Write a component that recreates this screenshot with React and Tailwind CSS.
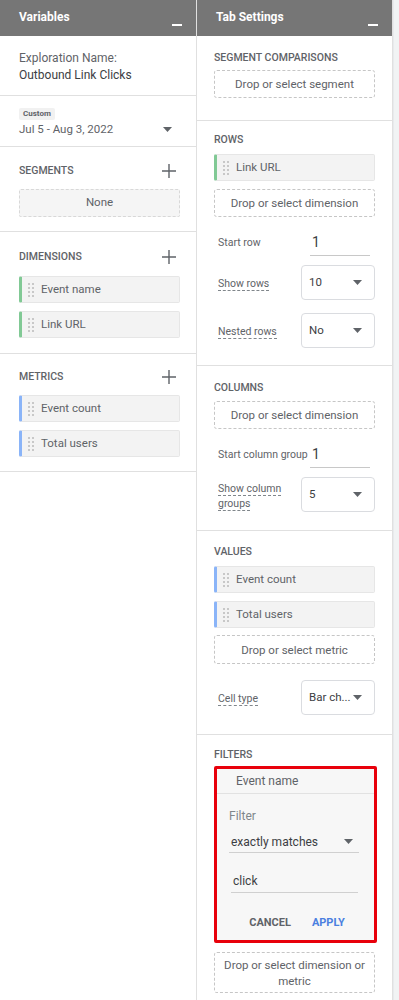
const font = { fontFamily: "Roboto, 'Noto Sans', sans-serif" };

const Minimize = () => (
    <span className="block w-[10px] h-[2px] bg-white mt-[14px]" />
);

const Plus = () => (
    <svg width="14" height="14" viewBox="0 0 14 14" className="mr-[4px]">
        <path d="M7 0v14M0 7h14" stroke="#5f6368" strokeWidth="1.4" />
    </svg>
);

const Caret = () => (
    <svg width="9" height="5" viewBox="0 0 9 5" className="shrink-0">
        <path d="M0 0h9L4.5 5z" fill="#5f6368" />
    </svg>
);

const Handle = () => (
    <div className="grid grid-cols-2 gap-x-[2px] gap-y-[2px] w-[6px]">
        {Array.from({ length: 8 }).map((_, i) => (
            <span key={i} className="w-[2px] h-[2px] bg-[#c8c8c8]" />
        ))}
    </div>
);

const Chip = ({ label, color }) => (
    <div
        className={`h-[27px] flex items-center bg-[#f3f3f3] border border-[#e6e6e6] border-l-[3px] rounded-[2px] ${
            color === "green" ? "border-l-[#81c995]" : "border-l-[#8ab4f8]"
        }`}
    >
        <div className="ml-[6px]">
            <Handle />
        </div>
        <span className="ml-[7px] text-[11.5px] text-[#5f6368]">{label}</span>
    </div>
);

const Dashed = ({ children, h = "h-[28px]" }) => (
    <div
        className={`${h} flex items-center justify-center text-center border border-dashed border-[#c6c6c6] rounded-[3px] text-[11.5px] leading-[16px] text-[#5f6368]`}
    >
        {children}
    </div>
);

const Title = ({ children, plus }) => (
    <div className="h-[14px] flex items-center justify-between">
        <span className="text-[10.5px] font-medium text-[#5f6368] uppercase">{children}</span>
        {plus && <Plus />}
    </div>
);

const Select = ({ value }) => (
    <div className="w-[74px] h-[35px] shrink-0 border border-[#dadce0] rounded-[4px] flex items-center justify-between pl-[7px] pr-[12px] text-[11.5px] text-[#3c4043] whitespace-nowrap">
        <span>{value}</span>
        <Caret />
    </div>
);

const DottedLabel = ({ children }) => (
    <span className="border-b border-dashed border-[#80868b] text-[10.5px] leading-[13px] text-[#5f6368]">
        {children}
    </span>
);

const SelectRow = ({ label, value, className = "" }) => (
    <div className={`flex items-center justify-between ${className}`}>
        <div className="pl-[4px] w-[76px] leading-[13px]">
            <DottedLabel>{label}</DottedLabel>
        </div>
        <Select value={value} />
    </div>
);

const InputRow = ({ label, value, className = "" }) => (
    <div className={`flex items-center h-[26px] ${className}`}>
        <span className="pl-[4px] w-[96px] text-[10.5px] text-[#5f6368] whitespace-nowrap">{label}</span>
        <div className="w-[60px] h-[26px] border-b border-[#c8c8c8] flex items-center pl-[2px] text-[14px] text-[#3c4043]">
            {value}
        </div>
    </div>
);

const Header = ({ title }) => (
    <div className="h-[36px] bg-[#767676] flex items-start justify-between pl-[19px] pr-[14px] pt-[10px]">
        <span className="text-[12px] leading-[15px] font-bold text-white">{title}</span>
        <Minimize />
    </div>
);

const App = () => {
    return (
        <div style={font} className="flex w-[399px] h-[1000px] bg-[#f1f3f4] overflow-hidden">
            <div className="w-[197px] shrink-0 bg-white border-r border-[#e0e0e0]">
                <Header title="Variables" />

                <div className="pl-[19px] pr-[16px] pt-[14px] pb-[11px] border-b border-[#e0e0e0] text-[12px] leading-[17px]">
                    <div className="text-[#5f6368]">Exploration Name:</div>
                    <div className="text-[#3c4043]">Outbound Link Clicks</div>
                </div>

                <div className="pl-[19px] pr-[24px] pt-[12px] pb-[8px] border-b border-[#e0e0e0]">
                    <div className="w-fit bg-[#f1f1f1] rounded-[2px] px-[4px] text-[8px] leading-[12px] font-bold text-[#5f6368]">
                        Custom
                    </div>
                    <div className="flex items-center justify-between">
                        <span className="text-[11.5px] leading-[18px] text-[#5f6368]">Jul 5 - Aug 3, 2022</span>
                        <Caret />
                    </div>
                </div>

                <div className="pl-[19px] pr-[16px] pt-[17px] pb-[14px] border-b border-[#e0e0e0]">
                    <Title plus>Segments</Title>
                    <div className="mt-[11px] h-[28px] flex items-center justify-center bg-[#f5f5f5] border border-dashed border-[#d8d8d8] rounded-[2px] text-[11.5px] text-[#5f6368]">
                        None
                    </div>
                </div>

                <div className="pl-[19px] pr-[16px] pt-[18px] pb-[15px] border-b border-[#e0e0e0]">
                    <Title plus>Dimensions</Title>
                    <div className="mt-[12px] flex flex-col gap-[8px]">
                        <Chip label="Event name" color="green" />
                        <Chip label="Link URL" color="green" />
                    </div>
                </div>

                <div className="pl-[19px] pr-[16px] pt-[16px] pb-[14px] border-b border-[#e0e0e0]">
                    <Title plus>Metrics</Title>
                    <div className="mt-[11px] flex flex-col gap-[8px]">
                        <Chip label="Event count" color="blue" />
                        <Chip label="Total users" color="blue" />
                    </div>
                </div>
            </div>

            <div className="w-[196px] shrink-0 bg-white border-r border-[#e0e0e0]">
                <Header title="Tab Settings" />

                <div className="px-[17px] pt-[15px] pb-[22px] border-b border-[#e0e0e0]">
                    <Title>Segment Comparisons</Title>
                    <div className="mt-[5px]">
                        <Dashed>Drop or select segment</Dashed>
                    </div>
                </div>

                <div className="px-[17px] pt-[12px] pb-[17px] border-b border-[#e0e0e0]">
                    <Title>Rows</Title>
                    <div className="mt-[7px] flex flex-col gap-[8px]">
                        <Chip label="Link URL" color="green" />
                        <Dashed>Drop or select dimension</Dashed>
                    </div>
                    <InputRow label="Start row" value="1" className="mt-[13px]" />
                    <SelectRow label="Show rows" value="10" className="mt-[9px]" />
                    <SelectRow label="Nested rows" value="No" className="mt-[13px]" />
                </div>

                <div className="px-[17px] pt-[15px] pb-[18px] border-b border-[#e0e0e0]">
                    <Title>Columns</Title>
                    <div className="mt-[6px]">
                        <Dashed>Drop or select dimension</Dashed>
                    </div>
                    <InputRow label="Start column group" value="1" className="mt-[13px]" />
                    <SelectRow label="Show column groups" value="5" className="mt-[9px]" />
                </div>

                <div className="px-[17px] pt-[14px] pb-[19px] border-b border-[#e0e0e0]">
                    <Title>Values</Title>
                    <div className="mt-[7px] flex flex-col gap-[8px]">
                        <Chip label="Event count" color="blue" />
                        <Chip label="Total users" color="blue" />
                    </div>
                    <div className="mt-[7px]">
                        <Dashed h="h-[29px]">Drop or select metric</Dashed>
                    </div>
                    <SelectRow label="Cell type" value="Bar ch..." className="mt-[16px]" />
                </div>

                <div className="px-[17px] pt-[13px]">
                    <Title>Filters</Title>
                    <div className="mt-[4px] mr-[-2px] border-[3px] border-[#e8000b] rounded-[2px] bg-[#f7f7f7]">
                        <div className="h-[25px] flex items-center pl-[19px] border-b border-[#e2e2e2] text-[12px] text-[#5f6368]">
                            Event name
                        </div>
                        <div className="pl-[12px] pr-[15px] pt-[15px]">
                            <div className="text-[12px] text-[#80868b] leading-[14px]">Filter</div>
                            <div className="mt-[8px] h-[22px] flex items-center justify-between pl-[2px] pr-[6px] border-b border-[#d0d0d0] text-[12px] text-[#3c4043]">
                                <span>exactly matches</span>
                                <Caret />
                            </div>
                            <div className="mt-[17px] ml-[2px] mr-[1px] h-[23px] flex items-center pl-[2px] border-b border-[#d0d0d0] text-[12px] text-[#3c4043]">
                                click
                            </div>
                            <div className="h-[47px] flex items-center justify-center gap-[21px] pl-[6px] pt-[14px] text-[11px] font-bold">
                                <span className="text-[#5f6368]">CANCEL</span>
                                <span className="text-[#4a80e0]">APPLY</span>
                            </div>
                        </div>
                    </div>
                    <div className="mt-[9px]">
                        <Dashed h="h-[41px]">
                            Drop or select dimension or
                            <br />
                            metric
                        </Dashed>
                    </div>
                </div>
            </div>

            <div className="flex-1 border-l border-[#e8eaed]" />
        </div>
    );
};

export default App;
